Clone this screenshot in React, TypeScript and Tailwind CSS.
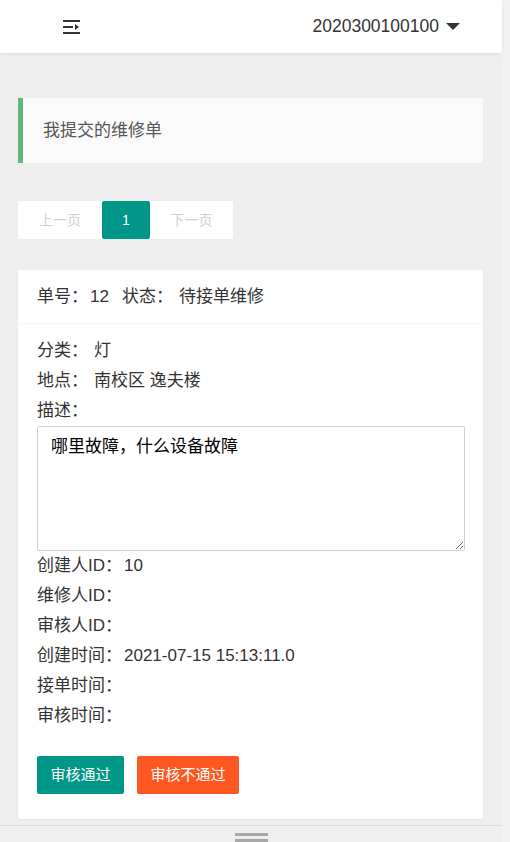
const font = "font-['Liberation_Sans','Noto_Sans_CJK_SC',sans-serif]";

function MenuIcon() {
  return (
    <svg width="20" height="18" viewBox="0 0 20 18" className="block">
      <rect x="1" y="2" width="17" height="2" fill="#333" />
      <rect x="1" y="8" width="10" height="2" fill="#333" />
      <path d="M13 6 L17 9 L13 12 Z" fill="#333" />
      <rect x="1" y="14" width="17" height="2" fill="#333" />
    </svg>
  );
}

const rows: [string, string][] = [
  ['创建人ID：', '10'],
  ['维修人ID：', ''],
  ['审核人ID：', ''],
  ['创建时间：', '2021-07-15 15:13:11.0'],
  ['接单时间：', ''],
  ['审核时间：', ''],
];

export default function App() {
  return (
    <div className={`${font} flex min-h-[842px] w-[510px] bg-[#f2f2f2]`}>
      <div className="flex w-[502px] flex-col bg-[#eeeeee]">
        <header className="flex h-[53px] items-center justify-between bg-white pl-[62px] pr-[42px] shadow-[0_1px_3px_rgba(0,0,0,0.08)]">
          <MenuIcon />
          <div className="flex items-center gap-[7px] text-[17.5px] text-[#333]">
            <span>2020300100100</span>
            <span className="h-0 w-0 border-x-[7px] border-t-[7px] border-x-transparent border-t-[#333]" />
          </div>
        </header>

        <div className="flex flex-1 flex-col pb-[6px] pl-[18px] pr-[19px] pt-[45px]">
          <div className="flex h-[65px] items-center rounded-r-[2px] border-l-[5px] border-[#5FB878] bg-[#FAFAFA] pl-[20px] text-[17px] text-[#555]">
            我提交的维修单
          </div>

          <div className="mt-[38px] flex h-[38px] items-stretch text-[14px]">
            <span className="flex w-[84px] items-center justify-center rounded-l-[2px] bg-white text-[#d2d2d2]">上一页</span>
            <span className="flex w-[48px] items-center justify-center rounded-[2px] bg-[#009688] text-white">1</span>
            <span className="flex w-[83px] items-center justify-center rounded-r-[2px] bg-white text-[#d2d2d2]">下一页</span>
          </div>

          <div className="mt-[31px] rounded-[2px] bg-white shadow-[0_1px_2px_rgba(0,0,0,0.05)]">
            <div className="flex h-[54px] items-center border-b border-[#f6f6f6] px-[19px] text-[17px] text-[#333]">
              <span>单号：</span>
              <span className="ml-[2px]">12</span>
              <span className="ml-[13px]">状态：</span>
              <span className="ml-[6px]">待接单维修</span>
            </div>
            <div className="px-[19px] pb-[25px] pt-[12px] text-[17px] leading-[30px] text-[#333]">
              <div>
                分类：<span className="ml-[6px]">灯</span>
              </div>
              <div>
                地点：<span className="ml-[6px]">南校区 逸夫楼</span>
              </div>
              <div>描述：</div>
              <textarea
                readOnly
                defaultValue="哪里故障，什么设备故障"
                className="block h-[125px] w-[428px] resize-y rounded-[2px] border border-[#cfcfcf] bg-white px-[13px] py-[6px] text-[17px] leading-[28px] text-black outline-none"
              />
              {rows.map(([k, v]) => (
                <div key={k} className="leading-[30px]">
                  {k}
                  <span className="ml-[2px]">{v}</span>
                </div>
              ))}
              <div className="mt-[25px] flex gap-[13px] text-[15px] text-white">
                <button className="h-[38px] w-[87px] rounded-[2px] bg-[#009688]">审核通过</button>
                <button className="h-[38px] w-[102px] rounded-[2px] bg-[#FF5722]">审核不通过</button>
              </div>
            </div>
          </div>
        </div>

        <div className="flex h-[17px] justify-center border-t border-[#dcdcdc] bg-[#efefef]">
          <div className="mt-[7px] flex h-[10px] w-[33px] flex-col gap-[3px]">
            <div className="h-[3px] bg-[#a8a8a8]" />
            <div className="h-[3px] bg-[#a8a8a8]" />
          </div>
        </div>
      </div>
    </div>
  );
}
